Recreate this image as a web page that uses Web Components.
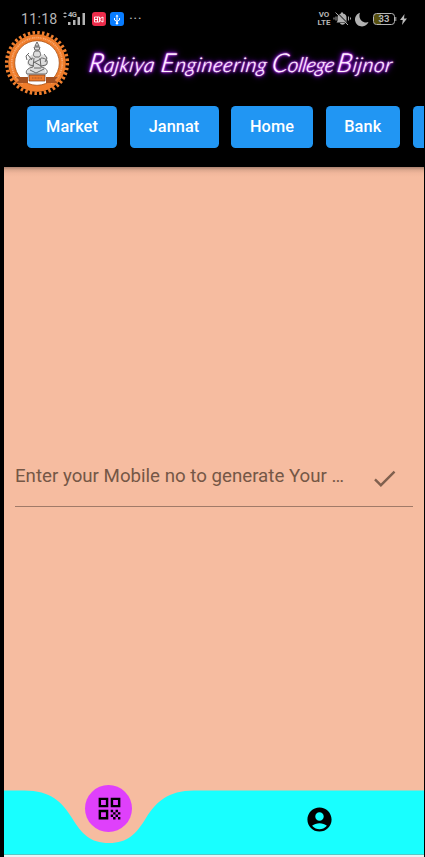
<!DOCTYPE html>
<html lang="en">
<head>
<meta charset="utf-8">
<meta name="viewport" content="width=device-width">
<title>Rajkiya Engineering College Bijnor</title>
<style>
html,body{margin:0;height:100%;background:#000;overflow:hidden}
body{font-family:Roboto,"Noto Sans",sans-serif}
</style>
</head>
<body>
<college-app></college-app>
<script>
function define(name, html, after) {
  customElements.define(name, class extends HTMLElement {
    connectedCallback() {
      if (this.shadowRoot) return;
      const t = document.createElement('template');
      t.innerHTML = html;
      this.attachShadow({mode: 'open'}).append(t.content.cloneNode(true));
      if (after) after(this.shadowRoot, this);
    }
  });
}

define('status-bar', `
<style>
:host{display:flex;height:30px;box-sizing:border-box;padding:8px 18px 0 21px;color:#b5b5b5;align-items:flex-start}
svg{display:block;flex:none}
time{font-size:14.2px;line-height:23px;letter-spacing:.25px;width:41px;white-space:nowrap;flex:none}
.net{display:flex;width:25px;height:20px;flex:none}
.net b{font-size:7.500px;line-height:8px;margin:3px 0 0 0;width:8px;letter-spacing:-.5px}
.bars{margin:4px 0 0 -8px}
.app{width:14px;height:14px;border-radius:3px;margin-top:4px;display:grid;place-items:center;flex:none}
.red{background:#ed2c4b;margin-left:5px}.usb{background:#087cff;margin-left:4px}
.dots{font-size:15px;line-height:23px;margin-left:5px;letter-spacing:.4px}
.right{display:flex;margin-left:auto}
.volte{font-weight:700;font-size:8px;line-height:8px;text-align:center;width:14px;margin-top:3px}
.volte span{display:block}
.batt{box-sizing:border-box;width:22px;height:12px;border:1px solid #b5b5b5;border-radius:3.5px;margin:5px 0 0 4px;background:linear-gradient(90deg,#57500f 33%,transparent 33%);font:700 9.500px/10px Roboto,sans-serif;text-align:center}
</style>
<time>11:18</time>
<div class="net"><svg width="6" height="9" viewBox="0 0 6 9" style="margin-top:3px"><path d="M1 3L3 1l2 2zM1 5L3 7l2-2z" fill="#aaa"/></svg><b>4G</b><svg class="bars" width="18" height="14" viewBox="0 0 18 14"><path d="M0 10h2.500v3H0zM5 8h2.500v5H5zM9.500 5H12v8H9.500zM14.500 1H17v12h-2.500z" fill="#b5b5b5"/></svg></div>
<div class="app red"><svg width="10" height="7" viewBox="0 0 10 7"><path d="M.5 1h5v5h-5zM6 2.500l3-1.500v5L6 4.500zM3.500 1v5M1 3.500h3" fill="none" stroke="#fff" stroke-width=".9"/></svg></div>
<div class="app usb"><svg width="8" height="11" viewBox="0 0 8 11"><path d="M4 2v7M1.500 4v2L4 7.500 6.500 6V4" fill="none" stroke="#fff"/><path d="M2.500 2.500L4 .5l1.500 2z" fill="#fff"/><circle cx="4" cy="9.300" r="1.200" fill="#fff"/></svg></div>
<span class="dots">···</span>
<div class="right">
<div class="volte"><span>VO</span><span>LTE</span></div>
<svg width="19" height="15" viewBox="0 0 19 15" style="margin:3px 1px 0 2px"><path d="M3.500 11.500l1-1.500V6.500C4.500 4 6 3 8 2.600V1.500h2v1.100c2.500.5 3.500 2 3.500 3.900V10l1 1.500zM7 12h5c-.5 2.300-4.500 2.300-5 0z" fill="#b0b0b0"/><path d="M4 1.500L16.500 14" stroke="#000" stroke-width="1"/><path d="M2.500 1.500L15 14M3 5.500v4M1 6.500v2M15.500 5.500v4M17.500 6.500v2" stroke="#aaa" fill="none"/></svg>
<svg width="14" height="15" viewBox="0 0 14 15" style="margin:4px 0 0 2px"><path d="M5 .7A7 7 0 1 0 13.500 10C9 12 2.500 7.500 5 .7z" fill="#b2b2b2"/></svg>
<div class="batt">33</div><svg width="2" height="12" viewBox="0 0 2 12" style="margin-top:5px"><path d="M.8 4v4" stroke="#aaa"/></svg>
<svg width="7" height="11" viewBox="0 0 7 11" style="margin:6px 0 0 3px"><path d="M4.500 0L0 6h2.800L2 11l5-6.500H4z" fill="#bbb"/></svg>
</div>`);

define('college-crest', `
<style>:host{display:block;width:66px;height:66px}svg{display:block}</style>
<svg width="66" height="66" viewBox="-33 -33 66 66">
<circle r="30.300" fill="none" stroke="#ef7f2e" stroke-width="3.600" stroke-dasharray="2.500 2.260"/>
<circle r="28.800" fill="#f07d2b"/>
<circle r="25.300" fill="none" stroke="#ffe0ca" stroke-width="1.700" stroke-dasharray="1.200 .7 .7 .8 1.500 .7" stroke-dashoffset="2" opacity=".42"/>
<path d="M-15 21.500A26 26 0 0 0 15 21.500" fill="none" stroke="#f07d2b" stroke-width="4.500"/>
<circle r="22.300" fill="#fff" stroke="#a85319" stroke-width=".8"/>
<g fill="#aaa" opacity=".4"><path d="M0-20l3 5 1 6 6 3 1 7-4 3 2 6-2 5H-9l-2-5 4-6-3-3 2-7 4-3z"/></g>
<g fill="none" stroke="#666" stroke-width="1">
<path d="M0-21l-2 4h4zM-3-16h6l-1 3h-4zM-2-12c-2 2-2 5 0 6h4c2-1 2-4 0-6zM-4-5c-5 1-6 5-3 7l4 1M4-5c5 0 8 3 5 7l-5 1M-3-5l-1 9M3-5l1 9M-4 4c-6 1-8 5-6 7h19c3-3 0-6-5-7M-9-8l4 5M-8-10l-3 3 1 4M7-9l3 4-2 4M-7 7l6 3M7 6l-8 4M-4 0l8-4M-3-1l7 4M-3 5h7"/>
</g>
<path d="M-21 14h12v6h-12l3-3zM21 14H9v6h12l-3-3z" fill="#a65221"/>
<path d="M-8 12H8v6H-8z" fill="#ed7b2c" stroke="#7b3a18" stroke-width=".7"/>
<path d="M-5 15H5" stroke="#a8582a" stroke-dasharray="1 .5"/>
</svg>`);

define('neon-title', `
<style>
:host{display:flex;color:#fff0ff;font:italic 300 20.500px/30px Lato,sans-serif;text-shadow:0 0 1px #f6c5ff,0 0 2px #d45cff,0 0 3px #b21dff,0 0 5px #9a00ff,0 0 7px #8000e8}
span{display:block;white-space:nowrap;flex:none;transform:skewX(-9deg)}
span::first-letter{font-size:26px}
.w1{width:72px;letter-spacing:.6px}
.w2{width:111px;letter-spacing:.65px}
.w3{width:65px;letter-spacing:-.2px}
.w4{width:60px;letter-spacing:.7px}
</style>
<span class="w1">Rajkiya</span><span class="w2">Engineering</span><span class="w3">College</span><span class="w4">Bijnor</span>`);

define('nav-button', `
<style>
:host{display:block;flex:none;width:var(--w);height:42px;border-radius:4.500px;background:#2196f3;color:#fff;font-size:16.300px;font-weight:500;line-height:42px;text-align:center;letter-spacing:.1px;white-space:nowrap}
</style><slot></slot>`, (r, el) => el.style.setProperty('--w', el.getAttribute('width') + 'px'));

define('app-header', `
<style>
:host{display:block;height:137px;background:#000}
.brand{display:flex;height:66px}
college-crest{margin-left:4px}
neon-title{margin:17px 0 0 18px}
nav{display:flex;gap:12.500px;padding-left:27px;margin-top:10px;width:397px;overflow:hidden}
</style>
<div class="brand"><college-crest></college-crest><neon-title></neon-title></div>
<nav><nav-button width="90">Market</nav-button><nav-button width="89">Jannat</nav-button><nav-button width="82">Home</nav-button><nav-button width="74.5">Bank</nav-button><nav-button width="80"></nav-button></nav>`);

define('mobile-field', `
<style>
:host{display:flex;align-items:center;justify-content:space-between;height:56px;border-bottom:1px solid #a17a68;color:#755746;font-size:18.700px;box-sizing:border-box}
span{white-space:nowrap;margin-top:-6px}
svg{display:block;margin-right:14px}
</style>
<span><slot></slot></span>
<svg width="29" height="29" viewBox="0 0 24 24"><path fill="#80604e" d="M9 16.170L4.830 12l-1.420 1.410L9 19 21 7l-1.410-1.410z"/></svg>`);

define('bottom-bar', `
<style>
:host{display:grid;height:73px;grid-template-columns:1fr 1fr}
.bg{grid-area:1/1/2/3;display:block}
.item{grid-row:1;display:grid;place-items:center;align-self:start;justify-self:center;z-index:1}
.active{grid-column:1;width:47px;height:47px;border-radius:50%;background:#df40fb;margin:.5px 1px 0 0}
.active svg{margin-left:1px}
.user{grid-column:2;margin-top:21px}
svg{display:block}
</style>
<svg class="bg" width="420" height="73" viewBox="4 784 420 73"><path fill="#18ffff" d="M4 790.500H24C51 790.500 62 802 72 818C82 834 90 843 109 843C128 843 136 834 146 818C156 802 168 790.500 194 790.500H424V854H4z"/><path fill="#55c9c6" d="M4 854h420v1H4z"/><path fill="#e9f4f4" d="M4 855h420v2H4z"/></svg>
<div class="item active"><svg width="29" height="29" viewBox="0 0 24 24"><path fill-rule="evenodd" d="M3 11h8V3H3zm2-6h4v4H5zM3 21h8v-8H3zm2-6h4v4H5zM13 3v8h8V3zm6 6h-4V5h4zM19 19h2v2h-2zM13 13h2v2h-2zM15 15h2v2h-2zM13 17h2v2h-2zM15 19h2v2h-2zM17 17h2v2h-2zM17 13h2v2h-2zM19 15h2v2h-2z"/></svg></div>
<div class="item user"><svg width="29" height="29" viewBox="0 0 24 24"><path d="M12 2C6.480 2 2 6.480 2 12s4.480 10 10 10 10-4.480 10-10S17.520 2 12 2zm0 4c1.930 0 3.500 1.570 3.500 3.500S13.930 13 12 13s-3.500-1.570-3.500-3.500S10.070 6 12 6zm0 14c-2.030 0-4.430-.82-6.140-2.880C7.550 15.800 9.680 15 12 15s4.450.8 6.140 2.120C16.430 19.180 14.030 20 12 20z"/></svg></div>`);

define('college-app', `
<style>
:host{display:flex;flex-direction:column;width:425px;height:857px;background:#000;overflow:hidden}
main{flex:1;margin:0 1px 0 4px;background:linear-gradient(#a98170,#dda88e 3px,#f0b69b 6px,#f6bca0 10px) #f6bca0;display:flex;flex-direction:column;justify-content:space-between}
mobile-field{margin:284px 11px 0}
</style>
<status-bar></status-bar><app-header></app-header>
<main><mobile-field>Enter your Mobile no to generate Your …</mobile-field><bottom-bar></bottom-bar></main>`);
</script>
</body>
</html>
